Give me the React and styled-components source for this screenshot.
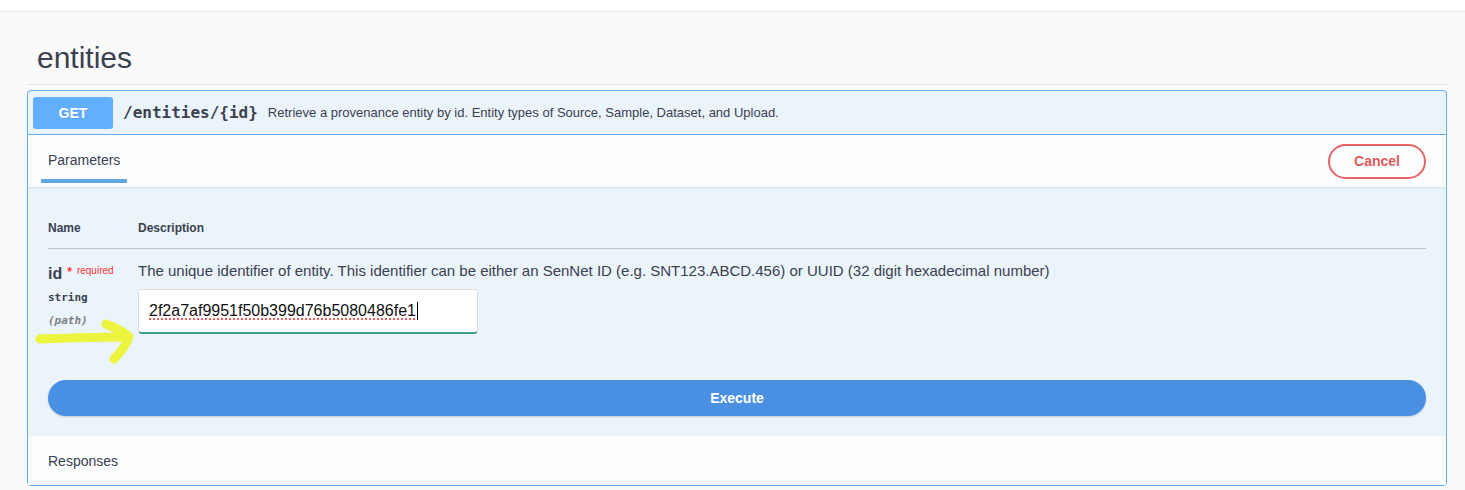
import React from "react";
import styled, { createGlobalStyle } from "styled-components";

const Global = createGlobalStyle`
  html, body { margin: 0; padding: 0; background: #fafafa; }
  body { font-family: "Liberation Sans", Arial, sans-serif; color: #3b4151; }
  * { box-sizing: border-box; }
`;

const TopBar = styled.div`
  height: 12px;
  background: #ffffff;
  border-bottom: 1px solid #e3e3e3;
`;

const Page = styled.div`
  padding: 0 18px 0 27px;
`;

const TagHeading = styled.h3`
  margin: 0;
  padding: 28px 10px 8px 10px;
  font-size: 30px;
  line-height: 36px;
  font-weight: 400;
  color: #3b4151;
  border-bottom: 1px solid #e6e2dc;
`;

const OpBlock = styled.div`
  margin-top: 5px;
  border: 1px solid #61affe;
  border-radius: 4px;
  background: #ebf3fb;
  position: relative;
`;

const Summary = styled.div`
  display: flex;
  align-items: center;
  padding: 5px;
  height: 44px;
  border-bottom: 1px solid #61affe;
`;

const Method = styled.span`
  width: 80px;
  height: 32px;
  border-radius: 3px;
  background: #61affe;
  color: #fff;
  font-weight: 700;
  font-size: 14px;
  display: flex;
  align-items: center;
  justify-content: center;
  text-shadow: 0 1px 0 rgba(0, 0, 0, 0.1);
`;

const Path = styled.span`
  margin-left: 10px;
  font-family: "DejaVu Sans Mono", monospace;
  font-weight: 700;
  font-size: 16px;
  color: #3b4151;
`;

const SummaryDesc = styled.span`
  margin-left: 10px;
  font-size: 13px;
  color: #3b4151;
`;

const SectionHeader = styled.div`
  display: flex;
  align-items: center;
  justify-content: space-between;
  height: 52px;
  padding: 0 20px 0 13px;
  background: rgba(255, 255, 255, 0.8);
  box-shadow: 0 1px 2px rgba(0, 0, 0, 0.1);
`;

const Tab = styled.div`
  position: relative;
  height: 100%;
  display: flex;
  align-items: center;
  padding: 0 7px 2px 7px;
  font-size: 14px;
  color: #3b4151;
  &::after {
    content: "";
    position: absolute;
    left: 0;
    right: 0;
    bottom: 4px;
    height: 4px;
    background: #5fa8e4;
  }
`;

const CancelButton = styled.button`
  width: 98px;
  height: 35px;
  border: 2px solid #e86464;
  border-radius: 20px;
  background: transparent;
  color: #e05a5a;
  font-family: "Liberation Sans", Arial, sans-serif;
  font-weight: 700;
  font-size: 14px;
`;

const ParamsBody = styled.div`
  padding: 34px 20px 20px 20px;
  position: relative;
`;

const TableHead = styled.div`
  display: grid;
  grid-template-columns: 90px 1fr;
  padding-bottom: 13px;
  border-bottom: 1px solid rgba(59, 65, 81, 0.25);
  font-size: 12px;
  font-weight: 700;
  color: #3b4151;
`;

const ParamRow = styled.div`
  display: grid;
  grid-template-columns: 90px 1fr;
  padding-top: 12px;
`;

const NameCol = styled.div`
  display: flex;
  flex-direction: column;
`;

const ParamName = styled.div`
  font-size: 16px;
  font-weight: 700;
  color: #3b4151;
  line-height: 20px;
`;

const Star = styled.span`
  color: #ff3333;
  font-size: 12px;
  margin-left: 5px;
  vertical-align: 3px;
`;

const Required = styled.span`
  color: #ff3333;
  font-size: 10px;
  font-weight: 400;
  vertical-align: 5px;
  margin-left: 5px;
`;

const ParamType = styled.div`
  margin-top: 7px;
  font-family: "DejaVu Sans Mono", monospace;
  font-weight: 700;
  font-size: 11px;
  color: #3b4151;
`;

const ParamIn = styled.div`
  margin-top: 10px;
  font-family: "DejaVu Sans Mono", monospace;
  font-style: italic;
  font-weight: 700;
  font-size: 11px;
  color: #808080;
`;

const DescCol = styled.div`
  display: flex;
  flex-direction: column;
`;

const DescText = styled.div`
  font-size: 15px;
  line-height: 20px;
  color: #3b4151;
`;

const FakeInput = styled.div`
  margin-top: 8px;
  width: 340px;
  height: 45px;
  display: flex;
  align-items: center;
  padding: 0 10px;
  background: #fff;
  border: 1px solid #dcdcdc;
  border-bottom: 2px solid #3aa18c;
  border-radius: 4px;
  font-size: 16px;
  color: #111;
`;

const Misspelled = styled.span`
  text-decoration: underline dotted #e23b3b;
  text-underline-offset: 3px;
`;

const Caret = styled.span`
  display: inline-block;
  width: 1px;
  height: 18px;
  background: #000;
  margin-left: 1px;
`;

const ExecuteButton = styled.button`
  display: block;
  width: 100%;
  height: 36px;
  margin-top: 46px;
  border: none;
  border-radius: 18px;
  background: #4990e2;
  color: #fff;
  font-family: "Liberation Sans", Arial, sans-serif;
  font-weight: 700;
  font-size: 14px;
  box-shadow: 0 1px 2px rgba(0, 0, 0, 0.15);
`;

const Responses = styled.div`
  height: 49px;
  display: flex;
  align-items: center;
  padding: 0 20px;
  font-size: 14px;
  color: #3b4151;
  background: rgba(255, 255, 255, 0.8);
  box-shadow: 0 1px 2px rgba(0, 0, 0, 0.1);
`;

const ArrowOverlay = styled.svg`
  position: absolute;
  left: 6px;
  top: 122px;
  pointer-events: none;
`;

function HighlightArrow() {
  return (
    <ArrowOverlay width="110" height="60" viewBox="0 0 110 60">
      <g
        fill="none"
        stroke="#eef52e"
        strokeWidth="9"
        strokeLinecap="round"
        strokeLinejoin="round"
        opacity="0.92"
      >
        <path d="M6 30 C 35 29, 70 28, 94 28" />
        <path d="M72 15 C 82 19, 90 23, 95 28 C 92 36, 86 44, 80 50" />
      </g>
    </ArrowOverlay>
  );
}

export default function App() {
  return (
    <>
      <Global />
      <TopBar />
      <Page>
        <TagHeading>entities</TagHeading>
        <OpBlock>
          <Summary>
            <Method>GET</Method>
            <Path>/entities/{"{id}"}</Path>
            <SummaryDesc>
              Retrieve a provenance entity by id. Entity types of Source, Sample, Dataset, and Upload.
            </SummaryDesc>
          </Summary>
          <SectionHeader>
            <Tab>Parameters</Tab>
            <CancelButton>Cancel</CancelButton>
          </SectionHeader>
          <ParamsBody>
            <TableHead>
              <span>Name</span>
              <span>Description</span>
            </TableHead>
            <ParamRow>
              <NameCol>
                <ParamName>
                  id<Star>*</Star>
                  <Required>required</Required>
                </ParamName>
                <ParamType>string</ParamType>
                <ParamIn>(path)</ParamIn>
              </NameCol>
              <DescCol>
                <DescText>
                  The unique identifier of entity. This identifier can be either an SenNet ID (e.g. SNT123.ABCD.456) or UUID (32 digit hexadecimal number)
                </DescText>
                <FakeInput>
                  <Misspelled>2f2a7af9951f50b399d76b5080486fe1</Misspelled>
                  <Caret />
                </FakeInput>
              </DescCol>
            </ParamRow>
            <HighlightArrow />
            <ExecuteButton>Execute</ExecuteButton>
          </ParamsBody>
          <Responses>Responses</Responses>
        </OpBlock>
      </Page>
    </>
  );
}
